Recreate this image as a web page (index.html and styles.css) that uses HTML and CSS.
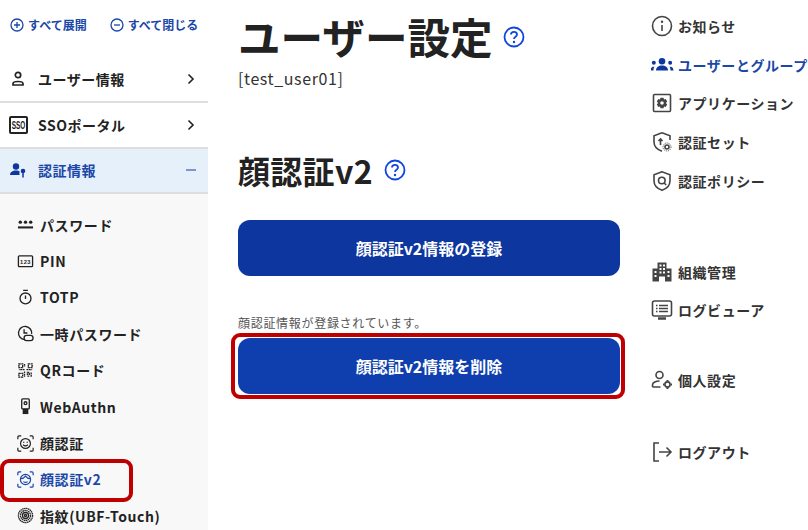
FILE: index.html
```html
<!DOCTYPE html>
<html lang="ja">
<head>
<meta charset="utf-8">
<title>ユーザー設定</title>
<link rel="stylesheet" href="styles.css">
</head>
<body>
<div class="page">
  <aside class="side">
    <div class="tools">
      <a class="tool"><svg class="ico12" viewBox="0 0 14 14"><circle cx="7" cy="7" r="6" /><path d="M7 4v6M4 7h6"/></svg>すべて展開</a>
      <a class="tool"><svg class="ico12" viewBox="0 0 14 14"><circle cx="7" cy="7" r="6" /><path d="M4 7h6"/></svg>すべて閉じる</a>
    </div>
    <div class="group">
      <svg class="gi" viewBox="0 0 18 18"><circle cx="9" cy="5" r="2.700"/><path d="M4 15v-1.200c0-1.500 2-2.300 5-2.300s5 .8 5 2.300V15z"/></svg>
      <span class="gl">ユーザー情報</span>
      <svg class="chev" viewBox="0 0 10 12"><path d="M2.500 1.500 7 6l-4.500 4.500"/></svg>
    </div>
    <div class="group">
      <svg class="gi sso" viewBox="0 0 20 18"><rect x="1" y="1" width="17" height="16" rx="1"/><text transform="translate(2.800 13) scale(1 1.600)" class="ssot">SSO</text></svg>
      <span class="gl">SSOポータル</span>
      <svg class="chev" viewBox="0 0 10 12"><path d="M2.500 1.500 7 6l-4.500 4.500"/></svg>
    </div>
    <div class="group open">
      <svg class="gi" viewBox="0 0 18 18"><circle cx="7" cy="5.500" r="3.200" class="f"/><path class="f" d="M1 14c0-3 2.500-4.500 6-4.500 1.500 0 2.500.3 3.500.8V14z"/><circle cx="14" cy="10" r="2.300" class="f"/><path class="k" d="M14 11v5.500"/></svg>
      <span class="gl">認証情報</span>
      <svg class="minus" viewBox="0 0 10 12"><path d="M0 6h10"/></svg>
    </div>
    <ul class="sub">
      <li><svg class="si" viewBox="0 0 18 18"><path class="fl" d="M1 11h16v2.200H1z"/><circle class="fl" cx="3.500" cy="6.500" r="1.800"/><circle class="fl" cx="9" cy="6.500" r="1.800"/><circle class="fl" cx="14.500" cy="6.500" r="1.800"/></svg>パスワード</li>
      <li><svg class="si" viewBox="0 0 18 18"><rect x="1.500" y="3" width="15" height="11.500" rx="1"/><text x="9" y="11.300" class="pint">123</text></svg>PIN</li>
      <li><svg class="si" viewBox="0 0 18 18"><circle cx="9" cy="10" r="5.800"/><path d="M6.500 1.500h5M9 7v3.500"/></svg>TOTP</li>
      <li><svg class="si" viewBox="0 0 18 18"><path d="M8 15.500a7 7 0 1 1 7.500-6"/><path d="M7.500 4.500V8.500H11"/><rect x="7.500" y="11" width="9.500" height="5.500" rx="2.700" class="fw"/></svg>一時パスワード</li>
      <li><svg class="si qr" viewBox="0 0 18 18"><path d="M2 2h4v4H2zM12 2h4v4h-4zM2 12h4v4H2zM8 2v3M8 8H2M10 8h6M8 10v6M11 11h2v2h-2zM15 11v5M11 15h2"/></svg>QRコード</li>
      <li><svg class="si" viewBox="0 0 18 18"><rect x="5" y="1" width="8" height="10.500" rx="1"/><rect x="6" y="11.500" width="6" height="5.500" class="fl"/><circle cx="9" cy="5.500" r="1.500"/></svg>WebAuthn</li>
      <li><svg class="si" viewBox="0 0 20 20"><path d="M1 5V2.500C1 1.700 1.700 1 2.500 1H5M15 1h2.500c.8 0 1.500.7 1.500 1.500V5M19 15v2.500c0 .8-.7 1.500-1.500 1.500H15M5 19H2.500C1.700 19 1 18.300 1 17.500V15"/><circle cx="10" cy="10" r="5.800"/><path d="M7.200 11.500c1.500 1.500 4 1.500 5.600 0"/><circle class="fl" cx="8" cy="8.500" r=".8"/><circle class="fl" cx="12" cy="8.500" r=".8"/></svg>顔認証</li>
      <li class="cur"><svg class="si" viewBox="0 0 20 20"><path d="M1 5V2.500C1 1.700 1.700 1 2.500 1H5M15 1h2.500c.8 0 1.500.7 1.500 1.500V5M19 15v2.500c0 .8-.7 1.500-1.500 1.500H15M5 19H2.500C1.700 19 1 18.300 1 17.500V15"/><circle cx="10" cy="10" r="6"/><path d="M4.500 9c2.500 0 4-1 5.500-3 1.500 2 3 3 5.500 3M7.500 12.500c1.500 1.200 3.500 1.200 5 0"/></svg>顔認証v2</li>
      <li><svg class="si" viewBox="0 0 18 18"><circle cx="9" cy="9" r="7.500" class="dash"/><circle cx="9" cy="9" r="5.300" class="dash"/><circle cx="9" cy="9" r="3.200"/><circle cx="9" cy="9" r="1.100"/></svg>指紋(UBF-Touch)</li>
    </ul>
  </aside>

  <main class="main">
    <div class="title-row">
      <h1>ユーザー設定</h1>
      <svg class="help big" viewBox="0 0 22 22"><circle cx="11" cy="11" r="9.500"/><path d="M8 8.500C8 6.700 9.300 5.800 11 5.800s3 1 3 2.600c0 2.400-3 2.300-3 4.700"/><circle class="dot" cx="11" cy="16" r="1.200"/></svg>
    </div>
    <p class="uid">[test_user01]</p>
    <div class="title-row h2row">
      <h2>顔認証v2</h2>
      <svg class="help" viewBox="0 0 22 22"><circle cx="11" cy="11" r="9.500"/><path d="M8 8.500C8 6.700 9.300 5.800 11 5.800s3 1 3 2.600c0 2.400-3 2.300-3 4.700"/><circle class="dot" cx="11" cy="16" r="1.200"/></svg>
    </div>
    <button class="btn">顔認証v2情報の登録</button>
    <p class="note">顔認証情報が登録されています。</p>
    <button class="btn del">顔認証v2情報を削除</button>
  </main>

  <nav class="right">
    <a class="r r1"><svg class="ri" viewBox="0 0 22 22"><circle cx="11" cy="11" r="9.500"/><path d="M11 10v6"/><circle class="d" cx="11" cy="6.800" r="1.200"/></svg>お知らせ</a>
    <a class="r on"><svg class="ri" viewBox="0 0 22 22"><circle class="d" cx="11" cy="7.500" r="3"/><path class="d" d="M5.500 16c0-3 2.500-4.500 5.500-4.500s5.500 1.500 5.500 4.500z"/><circle class="d" cx="3.500" cy="9" r="1.800"/><circle class="d" cx="18.500" cy="9" r="1.800"/><path class="d" d="M.5 16c0-2 1-3.500 3-3.500h.5c-.5 1-.8 2-.8 3.500zM21.500 16c0-2-1-3.500-3-3.500H18c.5 1 .8 2 .8 3.500z"/></svg>ユーザーとグループ</a>
    <a class="r"><svg class="ri" viewBox="0 0 22 22"><rect x="2.500" y="2.500" width="17" height="17" rx="1"/><path class="d" fill-rule="evenodd" d="M9.500 5.800h3l.5 1.700 1.700-.5 1.500 2.600-1.300 1.400 1.300 1.400-1.500 2.600-1.700-.5-.5 1.700h-3l-.5-1.700-1.700.5-1.500-2.600L7.100 11 5.800 9.600 7.300 7l1.700.5zM11 9.200a1.800 1.800 0 1 0 0 3.600 1.800 1.800 0 0 0 0-3.600z"/></svg>アプリケーション</a>
    <a class="r"><svg class="ri" viewBox="0 0 22 22"><path d="M11 1.800 3 4.800v6c0 5 3.500 8 8 9.500M11 1.800l8 3V9"/><path d="M9.500 14V8.500M7.500 10 9.500 8l2 2"/><circle cx="16" cy="16" r="2"/><circle class="gear" cx="16" cy="16" r="4"/></svg>認証セット</a>
    <a class="r"><svg class="ri" viewBox="0 0 22 22"><path d="M11 1.800 3 4.800v6c0 5 3.500 8 8 9.500 4.500-1.500 8-4.500 8-9.500v-6z"/><circle cx="10.800" cy="10.500" r="3.300"/><path d="m13.200 13 2 2"/></svg>認証ポリシー</a>
    <div class="gap g1"></div>
    <a class="r"><svg class="ri" viewBox="0 0 22 22"><path class="d" fill-rule="evenodd" d="M6.500 1.500h9v6h5v13H14v-5H8v5H1.500v-13h5zM8.500 3.500v2h2v-2zM12 3.500v2h2v-2zM8.500 7v2h2V7zM12 7v2h2V7zM3.500 10v2h2v-2zM8.500 10.500v2h2v-2zM12 10.500v2h2v-2zM16.500 10v2h2v-2zM3.500 14v2h2v-2zM16.500 14v2h2v-2z"/></svg>組織管理</a>
    <a class="r"><svg class="ri" viewBox="0 0 22 22"><rect x="1.500" y="2" width="19" height="15" rx="2"/><path d="M5 6.500h1.500M8 6.500h9M5 9.500h1.500M8 9.500h9M5 12.500h1.500M8 12.500h9"/><path class="hv" d="M7 19.500h8"/></svg>ログビューア</a>
    <div class="gap g2"></div>
    <a class="r"><svg class="ri" viewBox="0 0 22 22"><circle cx="8.500" cy="6" r="3.500"/><path d="M1.500 18v-2c0-2.500 3.500-4 7-4M1.500 18h8"/><circle cx="16.500" cy="15.500" r="2.600"/><path class="hv2" d="M16.500 11v1.500M16.500 18.500V20M12 15.500h1.500M19.500 15.500H21"/></svg>個人設定</a>
    <div class="gap g3"></div>
    <a class="r"><svg class="ri" viewBox="0 0 22 22"><path d="M8 2H3v18h5M8 11h12M15.500 6.500 20 11l-4.500 4.500"/></svg>ログアウト</a>
  </nav>
</div>
<div class="mark m1"></div>
<div class="mark m2"></div>
</body>
</html>
```

FILE: styles.css
```css
* { box-sizing: border-box; }
html, body { margin: 0; height: 100%; overflow: hidden; background: #fff; }
body { font-family: "Noto Sans CJK JP", "Noto Sans", sans-serif; color: #222; }
p, ul, h1, h2 { margin: 0; padding: 0; }
svg { fill: none; stroke: currentColor; flex: none; }
.page { display: flex; width: 808px; height: 530px; overflow: hidden; }

.side { width: 208px; flex: none; display: flex; flex-direction: column; height: 530px; overflow: hidden; }
.tools { flex: none; height: 57.500px; display: flex; gap: 23px; padding: 16px 0 0 10px; }
.tool { display: flex; align-items: center; gap: 4px; height: 17px; font-size: 12px; font-weight: 700; color: #1a47a8; white-space: nowrap; }
.ico12 { width: 14px; height: 14px; stroke-width: 1.300; }
.group { flex: none; height: 45.500px; display: flex; align-items: center; padding: 0 12px 0 9px; border-bottom: 2px solid #dedede; font-size: 14px; font-weight: 700; color: #222; }
.gi { width: 18px; height: 18px; fill: none; stroke: #222; stroke-width: 1.700; margin-right: 11px; }
.sso { width: 20px; margin-right: 9px; stroke-width: 2; }
.ssot { font: 700 6.400px "Liberation Sans", sans-serif; fill: #222; stroke: none; }
.gl { flex: 1; letter-spacing: .5px; }
.chev { width: 10px; height: 12px; stroke-width: 1.600; color: #222; }
.open { background: #e6f0fb; color: #1a47a8; }
.open .gi { stroke: none; }
.open .f { fill: #0d369f; stroke: none; }
.open .k { stroke: #0d369f; stroke-width: 1.500; }
.minus { width: 10px; height: 12px; stroke-width: 1.500; color: #5b79bd; }
.sub { flex: 1; background: #f8f8f8; list-style: none; padding: 12.500px 0 0 17px; }
.sub li { height: 36.400px; display: flex; align-items: center; gap: 6px; font-size: 14px; font-weight: 700; letter-spacing: .6px; color: #222; white-space: nowrap; }
.si { width: 17px; height: 17px; stroke-width: 1.400; }
.fl { fill: currentColor; stroke: none; }
.fw { fill: #f8f8f8; }
.pint { font: 700 6px "Liberation Sans", sans-serif; text-anchor: middle; fill: #222; stroke: none; }
.qr { stroke-dasharray: 2 .6; }
.dash { stroke-dasharray: 1.600 .5; }
.cur { color: #1a47a8 !important; }

.main { width: 382px; flex: none; margin-left: 30px; display: flex; flex-direction: column; }
.title-row { display: flex; align-items: center; gap: 10px; }
h1 { font-size: 42.600px; font-weight: 700; line-height: 48px; margin-top: 12px; color: #222; }
.help { width: 22px; height: 22px; color: #0f45e0; stroke-width: 1.800; }
.big { margin-top: 13px; }
.help .dot { fill: currentColor; stroke: none; }
.uid { font-size: 16px; line-height: 20px; margin-top: 8px; color: #333; letter-spacing: .6px; }
.h2row { margin-top: 60px; gap: 11px; }
h2 { font-size: 32px; line-height: 44px; font-weight: 700; color: #222; letter-spacing: .3px; }
.btn { flex: none; width: 382px; height: 56px; border: 0; border-radius: 12px; background: #0d369f; color: #fff; font: 700 16px "Noto Sans CJK JP", sans-serif; margin-top: 28px; padding: 0; }
.note { font-size: 12px; line-height: 16px; margin-top: 39px; color: #555; letter-spacing: .7px; }
.del { background: #0f3fae; margin-top: 7px; }

.right { margin-left: 31px; flex: 1; display: flex; flex-direction: column; padding-top: 6.500px; overflow: hidden; }
.r { height: 38.700px; flex: none; display: flex; align-items: center; gap: 5px; font-size: 14px; font-weight: 700; letter-spacing: .55px; color: #333; white-space: nowrap; }
.ri { width: 22px; height: 22px; stroke-width: 1.600; color: #444; }
.ri .d { fill: currentColor; stroke: none; }
.ri .hv { stroke-width: 2.500; }
.ri .hv2 { stroke-width: 2; }
.ri .gear { stroke-dasharray: 1 1; stroke-width: 1; }
.on { color: #1a47a8; }
.on .ri { color: #0d369f; width: 24px; height: 24px; margin-left: -1px; margin-right: -1px; }
.gap { flex: none; }
.g1 { height: 52.300px; }
.g2 { height: 31.300px; }
.g3 { height: 32.800px; }

.mark { position: absolute; border: 4px solid #c00000; border-radius: 9px; pointer-events: none; }
.m1 { left: 0; top: 459px; width: 133px; height: 43px; }
.m2 { left: 231px; top: 333px; width: 394px; height: 66px; }
```
